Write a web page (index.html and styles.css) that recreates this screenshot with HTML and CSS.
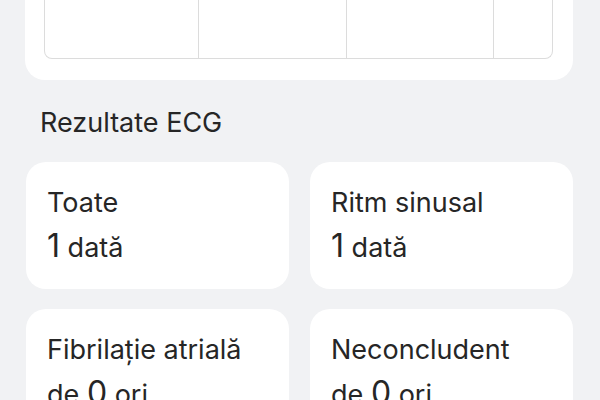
FILE: index.html
```html
<!DOCTYPE html>
<html lang="ro">
<head>
<meta charset="utf-8">
<link rel="stylesheet" href="styles.css">
</head>
<body>
<div class="page">
  <section class="chart-card">
    <div class="chart-grid">
      <div class="col"></div>
      <div class="col"></div>
      <div class="col"></div>
      <div class="col"></div>
    </div>
  </section>
  <h2 class="section-title">Rezultate ECG</h2>
  <div class="stats">
    <div class="stat">
      <div class="label">Toate</div>
      <div class="value"><span class="num">1</span> dată</div>
    </div>
    <div class="stat">
      <div class="label">Ritm sinusal</div>
      <div class="value"><span class="num">1</span> dată</div>
    </div>
    <div class="stat">
      <div class="label">Fibrilație atrială</div>
      <div class="value">de <span class="num">0</span> ori</div>
    </div>
    <div class="stat">
      <div class="label">Neconcludent</div>
      <div class="value">de <span class="num">0</span> ori</div>
    </div>
  </div>
</div>
</body>
</html>
```
FILE: styles.css
```css
html, body {
  margin: 0;
  padding: 0;
}
body {
  background: #f1f2f4;
  font-family: Inter, "Noto Sans", "Liberation Sans", sans-serif;
  color: #262626;
  width: 600px;
  height: 400px;
  overflow: hidden;
}
.page {
  padding: 0 27px 0 26px;
}
.chart-card {
  background: #fff;
  border-radius: 0 0 20px 20px;
  padding: 0 20px 21px 19px;
  margin-left: -1px;
}
.chart-grid {
  display: grid;
  grid-template-columns: 153px 148px 147px 1fr;
  height: 59px;
  border: 1px solid #dcdcdc;
  border-top: 0;
  border-radius: 0 0 8px 8px;
  box-sizing: border-box;
}
.col + .col {
  border-left: 1px solid #dcdcdc;
}
.section-title {
  margin: 27px 0 0 14px;
  font-size: 27px;
  font-weight: 400;
  line-height: 32px;
  color: #262626;
}
.stats {
  margin-top: 23px;
  display: grid;
  grid-template-columns: 1fr 1fr;
  column-gap: 21px;
  row-gap: 20px;
}
.stat {
  background: #fff;
  border-radius: 20px;
  height: 127px;
  box-sizing: border-box;
  padding: 25px 18px 0 21px;
}
.label {
  font-size: 27px;
  line-height: 32px;
  white-space: nowrap;
}
.value {
  margin-top: 9px;
  font-size: 27px;
  line-height: 36px;
  white-space: nowrap;
}
.num {
  font-size: 32px;
}
```
